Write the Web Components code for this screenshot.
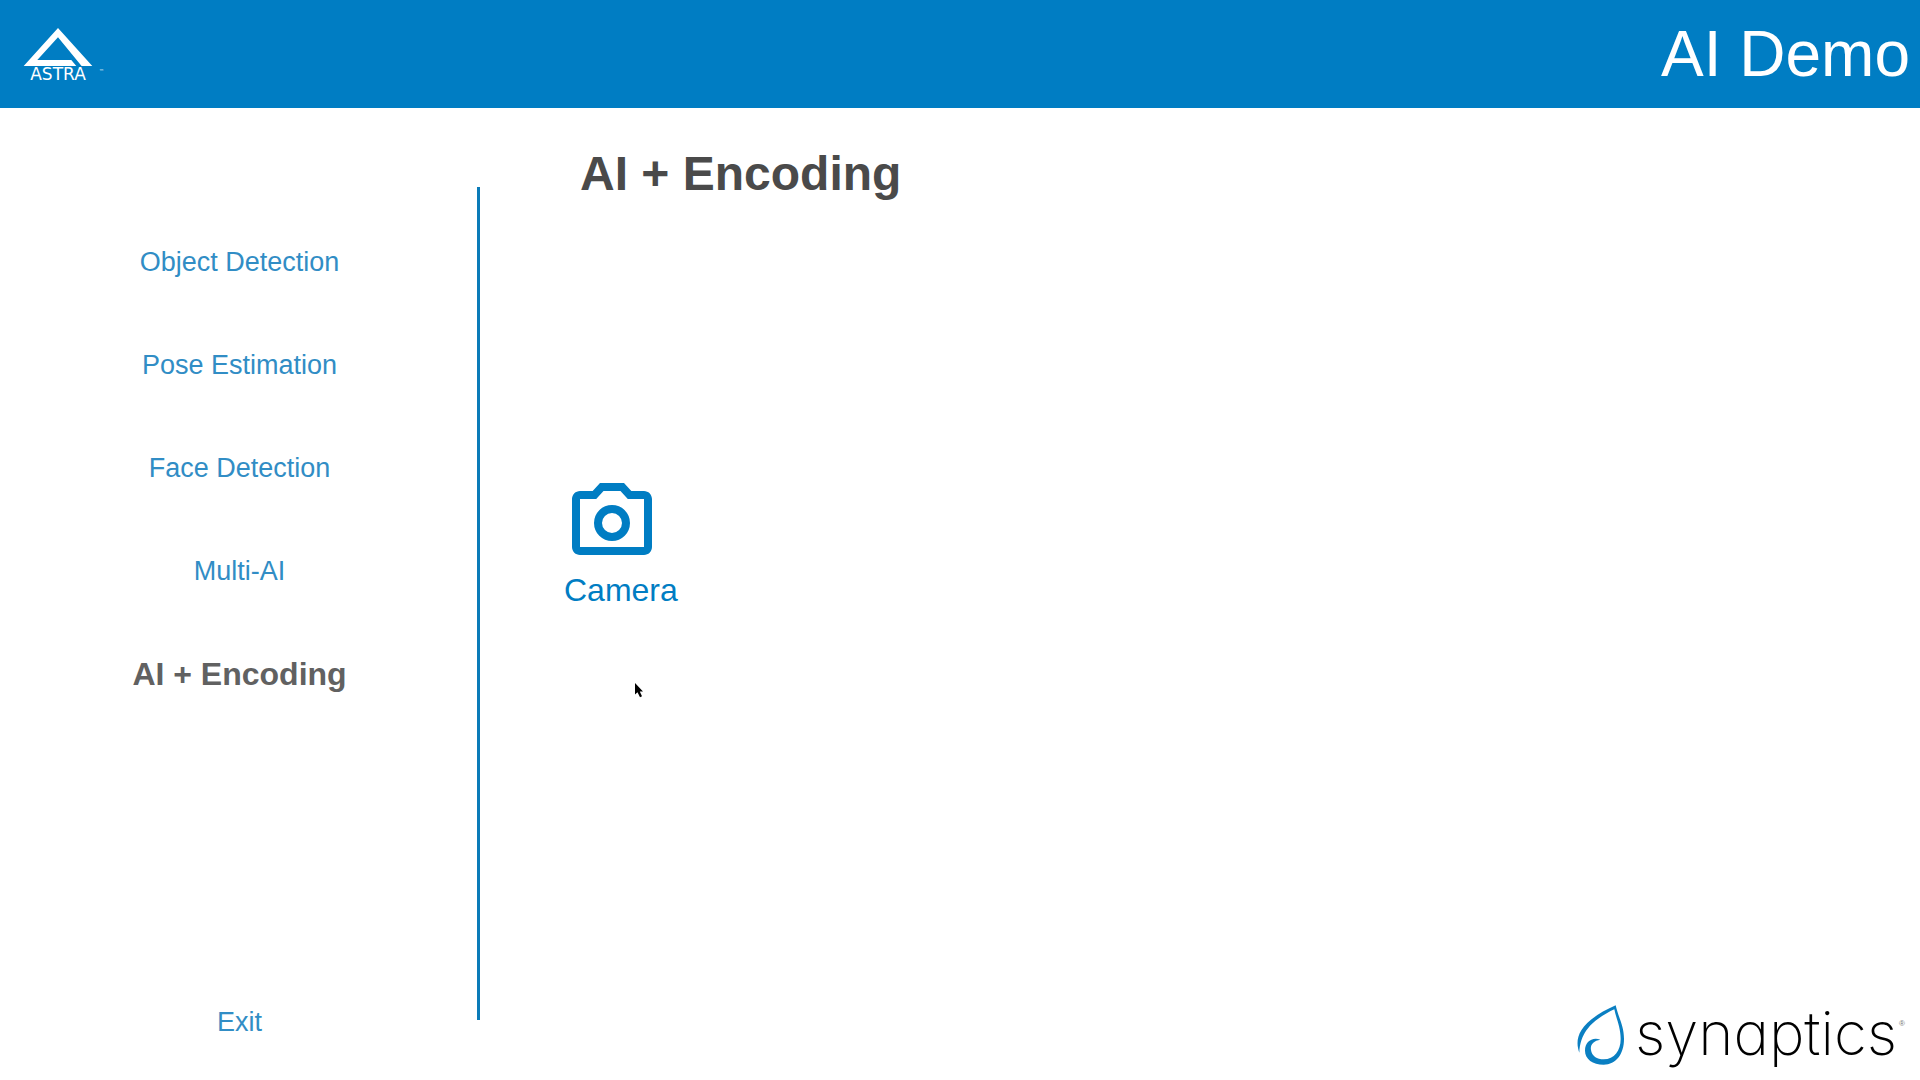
<!DOCTYPE html>
<html lang="en">
<head>
<meta charset="utf-8">
<title>AI Demo</title>
<style>
  html, body { margin: 0; background: #fff; }
  body { font-family: "Liberation Sans", Arial, sans-serif; --brand: #007dc3; }
</style>
</head>
<body>
<demo-app></demo-app>

<template id="t-app">
  <style>
    :host { display: flex; flex-direction: column; min-height: 100vh; }
    main { flex: 1; display: flex; }
    .divider { width: 3px; margin: 79px 0 60px; background: #0a7bb8; }
    .nav { width: calc(25% - 3px); }
    .content { flex: 1; display: flex; flex-direction: column; align-items: flex-start; box-sizing: border-box; padding: 38px 15px 15px 84px; }
    h1 { margin: 0 0 273px 16px; font-size: 48px; line-height: 56px; font-weight: bold; color: #4a4a4a; }
    synaptics-logo { margin-top: auto; align-self: flex-end; }
  </style>
  <app-header>AI Demo</app-header>
  <main>
    <side-nav class="nav">
      <nav-item>Object Detection</nav-item>
      <nav-item>Pose Estimation</nav-item>
      <nav-item>Face Detection</nav-item>
      <nav-item>Multi-AI</nav-item>
      <nav-item selected>AI + Encoding</nav-item>
      <nav-item slot="end">Exit</nav-item>
    </side-nav>
    <div class="divider"></div>
    <section class="content">
      <h1>AI + Encoding</h1>
      <source-button>Camera</source-button>
      <synaptics-logo></synaptics-logo>
    </section>
  </main>
  <mouse-pointer></mouse-pointer>
</template>

<template id="t-header">
  <style>
    :host { display: block; background: var(--brand); color: #fff; }
    header { display: flex; justify-content: space-between; align-items: center; height: 108px; padding: 0 10px; }
    .title { font-size: 64px; line-height: 72px; }
  </style>
  <header>
    <astra-logo></astra-logo>
    <span class="title"><slot></slot></span>
  </header>
</template>

<template id="t-astra">
  <style>
    :host { display: block; }
    svg { display: block; overflow: visible; }
    text { font-family: "DejaVu Sans", sans-serif; fill: #fff; }
  </style>
  <svg width="96" height="64" viewBox="10 22 96 64" role="img" aria-label="Astra">
    <path fill="#fff" d="M58 28 92.300 66H81.600L58 37.300 37.300 60H71.300L76.300 66H23.700Z"/>
    <text x="58" y="80" font-size="17" text-anchor="middle">ASTRA</text>
    <text x="99" y="73" font-size="5">™</text>
  </svg>
</template>

<template id="t-nav">
  <style>
    :host { display: block; }
    nav { display: flex; flex-direction: column; box-sizing: border-box; height: 100%; padding: 102px 0 7px 2px; }
    .end { margin-top: auto; }
  </style>
  <nav>
    <slot></slot>
    <div class="end"><slot name="end"></slot></div>
  </nav>
</template>

<template id="t-item">
  <style>
    :host { display: block; }
    button { display: block; width: 100%; height: 103px; margin: 0; padding: 0; border: 0; background: none; font: 27px/32px "Liberation Sans", Arial, sans-serif; color: #318dc5; cursor: pointer; }
    :host([selected]) button { font-size: 32px; font-weight: bold; color: #616161; }
  </style>
  <button type="button"><slot></slot></button>
</template>

<template id="t-source">
  <style>
    :host { display: block; }
    button { display: flex; flex-direction: column; align-items: flex-start; margin: 0; padding: 0; border: 0; background: none; font: 32px/38px "Liberation Sans", Arial, sans-serif; color: var(--brand); cursor: pointer; }
    svg { display: block; }
  </style>
  <button type="button">
    <svg width="96" height="96" viewBox="0 0 24 24" fill="currentColor" fill-rule="evenodd" aria-hidden="true">
      <path d="M15 2H9L7.170 4H4C2.900 4 2 4.900 2 6V18C2 19.100 2.900 20 4 20H20C21.100 20 22 19.100 22 18V6C22 4.900 21.100 4 20 4H16.830ZM14.120 4 15.950 6H20V18H4V6H8.050L9.880 4Z"/>
      <path d="M12 7.500A4.500 4.500 0 1 0 12 16.500A4.500 4.500 0 1 0 12 7.500ZM12 9.500A2.500 2.500 0 1 1 12 14.500A2.500 2.500 0 1 1 12 9.500Z"/>
    </svg>
    <slot></slot>
  </button>
</template>

<template id="t-synaptics">
  <style>
    :host { display: flex; align-items: flex-start; color: #000; }
    svg { display: block; margin-right: 10px; }
    .word { font: 200 60px/56px Inter, "Open Sans", sans-serif; font-feature-settings: "cv11" 1; }
    .mark { margin: 14px 0 0 2px; font: 8px/10px "Liberation Sans", sans-serif; color: #777; }
  </style>
  <svg width="48" height="60" viewBox="48 43 144 180" fill="#0a7fc2" aria-hidden="true">
    <path d="M164 44C172 80 189 105 189 145C189 190 165 222 128 222C95 222 72 205 72 180C72 155 92 138 118 147C98 150 87 162 90 178C92 196 108 206 128 206C160 206 179 180 179 145C179 110 166 85 160 56C115 78 58 110 55 186C40 145 50 95 164 44Z"/>
  </svg>
  <span class="word">synaptics</span><span class="mark">®</span>
</template>

<template id="t-pointer">
  <style>
    :host { position: absolute; left: 635px; top: 683px; pointer-events: none; }
    svg { display: block; }
  </style>
  <svg width="9" height="15" viewBox="0 0 9 15" aria-hidden="true"><path d="M0 0V11.500L2.500 9.200L5 14.200L7 13.200L4.800 8.500H8Z"/></svg>
</template>

<script>
  const define = (name, templateId) => customElements.define(name, class extends HTMLElement {
    constructor() {
      super();
      this.attachShadow({ mode: "open" })
        .append(document.getElementById(templateId).content.cloneNode(true));
    }
  });
  define("mouse-pointer", "t-pointer");
  define("synaptics-logo", "t-synaptics");
  define("source-button", "t-source");
  define("nav-item", "t-item");
  define("side-nav", "t-nav");
  define("astra-logo", "t-astra");
  define("app-header", "t-header");
  define("demo-app", "t-app");
</script>
</body>
</html>
